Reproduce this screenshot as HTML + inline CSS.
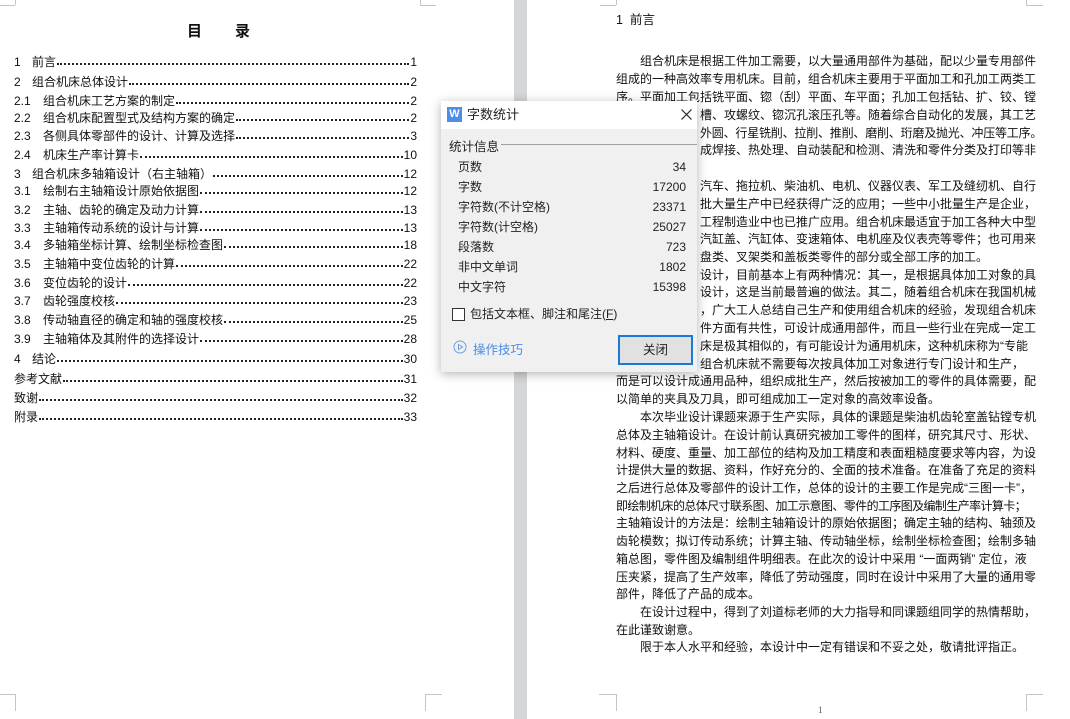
<!DOCTYPE html>
<html><head><meta charset="utf-8">
<style>
*{margin:0;padding:0;box-sizing:border-box}
body{width:1070px;height:719px;overflow:hidden;background:#fff;position:relative;font-family:"Liberation Sans","Noto Sans CJK SC",sans-serif;color:#111}
.gap{position:absolute;left:514px;top:0;width:13px;height:719px;background:#d5d6d8}
.m{position:absolute;background:#c4c4c4}
.toc{position:absolute;left:14px;width:403px;height:18px;font-size:12px;line-height:18px;display:flex;align-items:center;white-space:nowrap}
.toc .n{display:inline-block}
.toc .d{flex:1;border-bottom:2px dotted #222;height:0;margin:0 1px;position:relative;top:2px}
.l{position:absolute;left:616px;width:410px;height:18px;font-size:12px;line-height:18px;white-space:nowrap;text-align:justify;text-align-last:justify}
.l.s{text-align-last:left}
.dlg{position:absolute;left:441px;top:101px;width:256px;height:271px;background:#f0f0f0;box-shadow:0 2px 10px rgba(0,0,0,.3);font-size:12px;color:#222}
.tb{height:28px;background:#fff;position:relative}
.row{position:absolute;left:17px;width:228px;display:flex;justify-content:space-between;font-size:12px;line-height:16px}
</style></head><body>
<div class="gap"></div>
<div class="m" style="left:15px;top:0;width:1px;height:5px"></div><div class="m" style="left:0;top:5px;width:15px;height:1px"></div>
<div class="m" style="left:420px;top:0;width:1px;height:5px"></div><div class="m" style="left:420px;top:5px;width:16px;height:1px"></div>
<div class="m" style="left:0;top:694px;width:15px;height:1px"></div><div class="m" style="left:15px;top:694px;width:1px;height:17px"></div>
<div class="m" style="left:425px;top:694px;width:17px;height:1px"></div><div class="m" style="left:425px;top:694px;width:1px;height:17px"></div>
<div class="m" style="left:616px;top:0;width:1px;height:5px"></div><div class="m" style="left:600px;top:5px;width:16px;height:1px"></div>
<div class="m" style="left:1026px;top:0;width:1px;height:5px"></div><div class="m" style="left:1026px;top:5px;width:17px;height:1px"></div>
<div class="m" style="left:599px;top:694px;width:17px;height:1px"></div><div class="m" style="left:616px;top:694px;width:1px;height:17px"></div>
<div class="m" style="left:1026px;top:694px;width:17px;height:1px"></div><div class="m" style="left:1026px;top:694px;width:1px;height:17px"></div>

<div style="position:absolute;left:187px;top:20px;font-size:15px;font-weight:bold">目<span style="display:inline-block;width:33px"></span>录</div>

<div class="toc" style="top:53px"><span class="n" style="width:18px">1</span>前言<span class="d"></span>1</div>
<div class="toc" style="top:73px"><span class="n" style="width:18px">2</span>组合机床总体设计<span class="d"></span>2</div>
<div class="toc" style="top:92px"><span class="n" style="width:29px">2.1</span>组合机床工艺方案的制定<span class="d"></span>2</div>
<div class="toc" style="top:109px"><span class="n" style="width:29px">2.2</span>组合机床配置型式及结构方案的确定<span class="d"></span>2</div>
<div class="toc" style="top:127px"><span class="n" style="width:29px">2.3</span>各侧具体零部件的设计、计算及选择<span class="d"></span>3</div>
<div class="toc" style="top:146px"><span class="n" style="width:29px">2.4</span>机床生产率计算卡<span class="d"></span>10</div>
<div class="toc" style="top:165px"><span class="n" style="width:18px">3</span>组合机床多轴箱设计（右主轴箱）<span class="d"></span>12</div>
<div class="toc" style="top:182px"><span class="n" style="width:29px">3.1</span>绘制右主轴箱设计原始依据图<span class="d"></span>12</div>
<div class="toc" style="top:201px"><span class="n" style="width:29px">3.2</span>主轴、齿轮的确定及动力计算<span class="d"></span>13</div>
<div class="toc" style="top:219px"><span class="n" style="width:29px">3.3</span>主轴箱传动系统的设计与计算<span class="d"></span>13</div>
<div class="toc" style="top:236px"><span class="n" style="width:29px">3.4</span>多轴箱坐标计算、绘制坐标检查图<span class="d"></span>18</div>
<div class="toc" style="top:255px"><span class="n" style="width:29px">3.5</span>主轴箱中变位齿轮的计算<span class="d"></span>22</div>
<div class="toc" style="top:274px"><span class="n" style="width:29px">3.6</span>变位齿轮的设计<span class="d"></span>22</div>
<div class="toc" style="top:292px"><span class="n" style="width:29px">3.7</span>齿轮强度校核<span class="d"></span>23</div>
<div class="toc" style="top:311px"><span class="n" style="width:29px">3.8</span>传动轴直径的确定和轴的强度校核<span class="d"></span>25</div>
<div class="toc" style="top:330px"><span class="n" style="width:29px">3.9</span>主轴箱体及其附件的选择设计<span class="d"></span>28</div>
<div class="toc" style="top:350px"><span class="n" style="width:18px">4</span>结论<span class="d"></span>30</div>
<div class="toc" style="top:370px">参考文献<span class="d"></span>31</div>
<div class="toc" style="top:389px">致谢<span class="d"></span>32</div>
<div class="toc" style="top:408px">附录<span class="d"></span>33</div>

<div class="l s" style="top:11px;font-size:12.5px">1&nbsp;&nbsp;前言</div>
<div class="l" style="top:52px;left:640px;width:386px">组合机床是根据工件加工需要，以大量通用部件为基础，配以少量专用部件</div>
<div class="l" style="top:70px">组成的一种高效率专用机床。目前，组合机床主要用于平面加工和孔加工两类工</div>
<div class="l" style="top:88px">序。平面加工包括铣平面、锪（刮）平面、车平面；孔加工包括钻、扩、铰、镗</div>
<div class="l" style="top:106px;left:700px;width:326px">槽、攻螺纹、锪沉孔滚压孔等。随着综合自动化的发展，其工艺</div>
<div class="l" style="top:124px;left:700px;width:326px;letter-spacing:-0.2px">外圆、行星铣削、拉削、推削、磨削、珩磨及抛光、冲压等工序。</div>
<div class="l" style="top:141px;left:700px;width:326px">成焊接、热处理、自动装配和检测、清洗和零件分类及打印等非</div>
<div class="l" style="top:177px;left:700px;width:326px">汽车、拖拉机、柴油机、电机、仪器仪表、军工及缝纫机、自行</div>
<div class="l" style="top:195px;left:700px;width:326px">批大量生产中已经获得广泛的应用；一些中小批量生产是企业，</div>
<div class="l" style="top:213px;left:700px;width:326px">工程制造业中也已推广应用。组合机床最适宜于加工各种大中型</div>
<div class="l" style="top:230px;left:700px;width:326px">汽缸盖、汽缸体、变速箱体、电机座及仪表壳等零件；也可用来</div>
<div class="l s" style="top:248px;left:700px;width:326px">盘类、叉架类和盖板类零件的部分或全部工序的加工。</div>
<div class="l" style="top:266px;left:700px;width:326px">设计，目前基本上有两种情况：其一，是根据具体加工对象的具</div>
<div class="l" style="top:283px;left:700px;width:326px">设计，这是当前最普遍的做法。其二，随着组合机床在我国机械</div>
<div class="l" style="top:301px;left:700px;width:326px">，广大工人总结自己生产和使用组合机床的经验，发现组合机床</div>
<div class="l" style="top:319px;left:700px;width:326px">件方面有共性，可设计成通用部件，而且一些行业在完成一定工</div>
<div class="l" style="top:337px;left:700px;width:326px">床是极其相似的，有可能设计为通用机床，这种机床称为“专能</div>
<div class="l s" style="top:355px;left:700px;width:326px">组合机床就不需要每次按具体加工对象进行专门设计和生产，</div>
<div class="l" style="top:372px">而是可以设计成通用品种，组织成批生产，然后按被加工的零件的具体需要，配</div>
<div class="l s" style="top:390px">以简单的夹具及刀具，即可组成加工一定对象的高效率设备。</div>
<div class="l" style="top:408px;left:640px;width:386px">本次毕业设计课题来源于生产实际，具体的课题是柴油机齿轮室盖钻镗专机</div>
<div class="l" style="top:426px">总体及主轴箱设计。在设计前认真研究被加工零件的图样，研究其尺寸、形状、</div>
<div class="l" style="top:444px">材料、硬度、重量、加工部位的结构及加工精度和表面粗糙度要求等内容，为设</div>
<div class="l" style="top:461px">计提供大量的数据、资料，作好充分的、全面的技术准备。在准备了充足的资料</div>
<div class="l" style="top:479px">之后进行总体及零部件的设计工作，总体的设计的主要工作是完成“三图一卡”，</div>
<div class="l" style="top:497px;letter-spacing:-0.65px">即绘制机床的总体尺寸联系图、加工示意图、零件的工序图及编制生产率计算卡；</div>
<div class="l" style="top:514px">主轴箱设计的方法是：绘制主轴箱设计的原始依据图；确定主轴的结构、轴颈及</div>
<div class="l" style="top:532px">齿轮模数；拟订传动系统；计算主轴、传动轴坐标，绘制坐标检查图；绘制多轴</div>
<div class="l" style="top:550px">箱总图，零件图及编制组件明细表。在此次的设计中采用 “一面两销” 定位，液</div>
<div class="l" style="top:568px">压夹紧，提高了生产效率，降低了劳动强度，同时在设计中采用了大量的通用零</div>
<div class="l s" style="top:585px">部件，降低了产品的成本。</div>
<div class="l" style="top:603px;left:640px;width:386px">在设计过程中，得到了刘道标老师的大力指导和同课题组同学的热情帮助，</div>
<div class="l s" style="top:621px">在此谨致谢意。</div>
<div class="l" style="top:638px;left:640px;width:376px">限于本人水平和经验，本设计中一定有错误和不妥之处，敬请批评指正。</div>
<div style="position:absolute;left:818px;top:705px;font-size:9px;color:#555;font-family:'Liberation Serif',serif">1</div>

<div class="dlg">
 <div class="tb">
  <div style="position:absolute;left:6px;top:6px;width:15px;height:15px;background:#4a8ee6;color:#fff;font-size:11px;line-height:15px;text-align:center;font-weight:bold">W</div>
  <div style="position:absolute;left:26px;top:5px;font-size:13px;line-height:17px">字数统计</div>
  <svg style="position:absolute;left:240px;top:8px" width="11" height="11"><path d="M0.5 0.5L10.5 10.5M10.5 0.5L0.5 10.5" stroke="#222" stroke-width="1.2"/></svg>
 </div>
 <div style="position:absolute;left:8px;top:35px;font-size:12.5px">统计信息</div>
 <div style="position:absolute;left:60px;top:43px;width:196px;height:1px;background:#a0a0a0"></div>
 <div class="row" style="top:58px"><span>页数</span><span>34</span></div>
 <div class="row" style="top:78px"><span>字数</span><span>17200</span></div>
 <div class="row" style="top:98px"><span>字符数(不计空格)</span><span>23371</span></div>
 <div class="row" style="top:118px"><span>字符数(计空格)</span><span>25027</span></div>
 <div class="row" style="top:138px"><span>段落数</span><span>723</span></div>
 <div class="row" style="top:158px"><span>非中文单词</span><span>1802</span></div>
 <div class="row" style="top:178px"><span>中文字符</span><span>15398</span></div>
 <div style="position:absolute;left:11px;top:207px;width:13px;height:13px;border:1px solid #333;background:#fff"></div>
 <div style="position:absolute;left:29px;top:205px;font-size:12px;line-height:16px">包括文本框、脚注和尾注(<u>F</u>)</div>
 <svg style="position:absolute;left:12px;top:239px" width="14" height="14"><circle cx="7" cy="7" r="6" fill="none" stroke="#6aa0e0" stroke-width="1"/><path d="M5.5 4.5L9.5 7L5.5 9.5Z" fill="none" stroke="#6aa0e0"/></svg>
 <div style="position:absolute;left:32px;top:238px;color:#4a8ee6;font-size:12.5px">操作技巧</div>
 <div style="position:absolute;left:177px;top:234px;width:75px;height:30px;border:2px solid #1a78d8;background:#e1e1e1;text-align:center;line-height:26px;font-size:12.5px">关闭</div>
</div>
</body></html>
